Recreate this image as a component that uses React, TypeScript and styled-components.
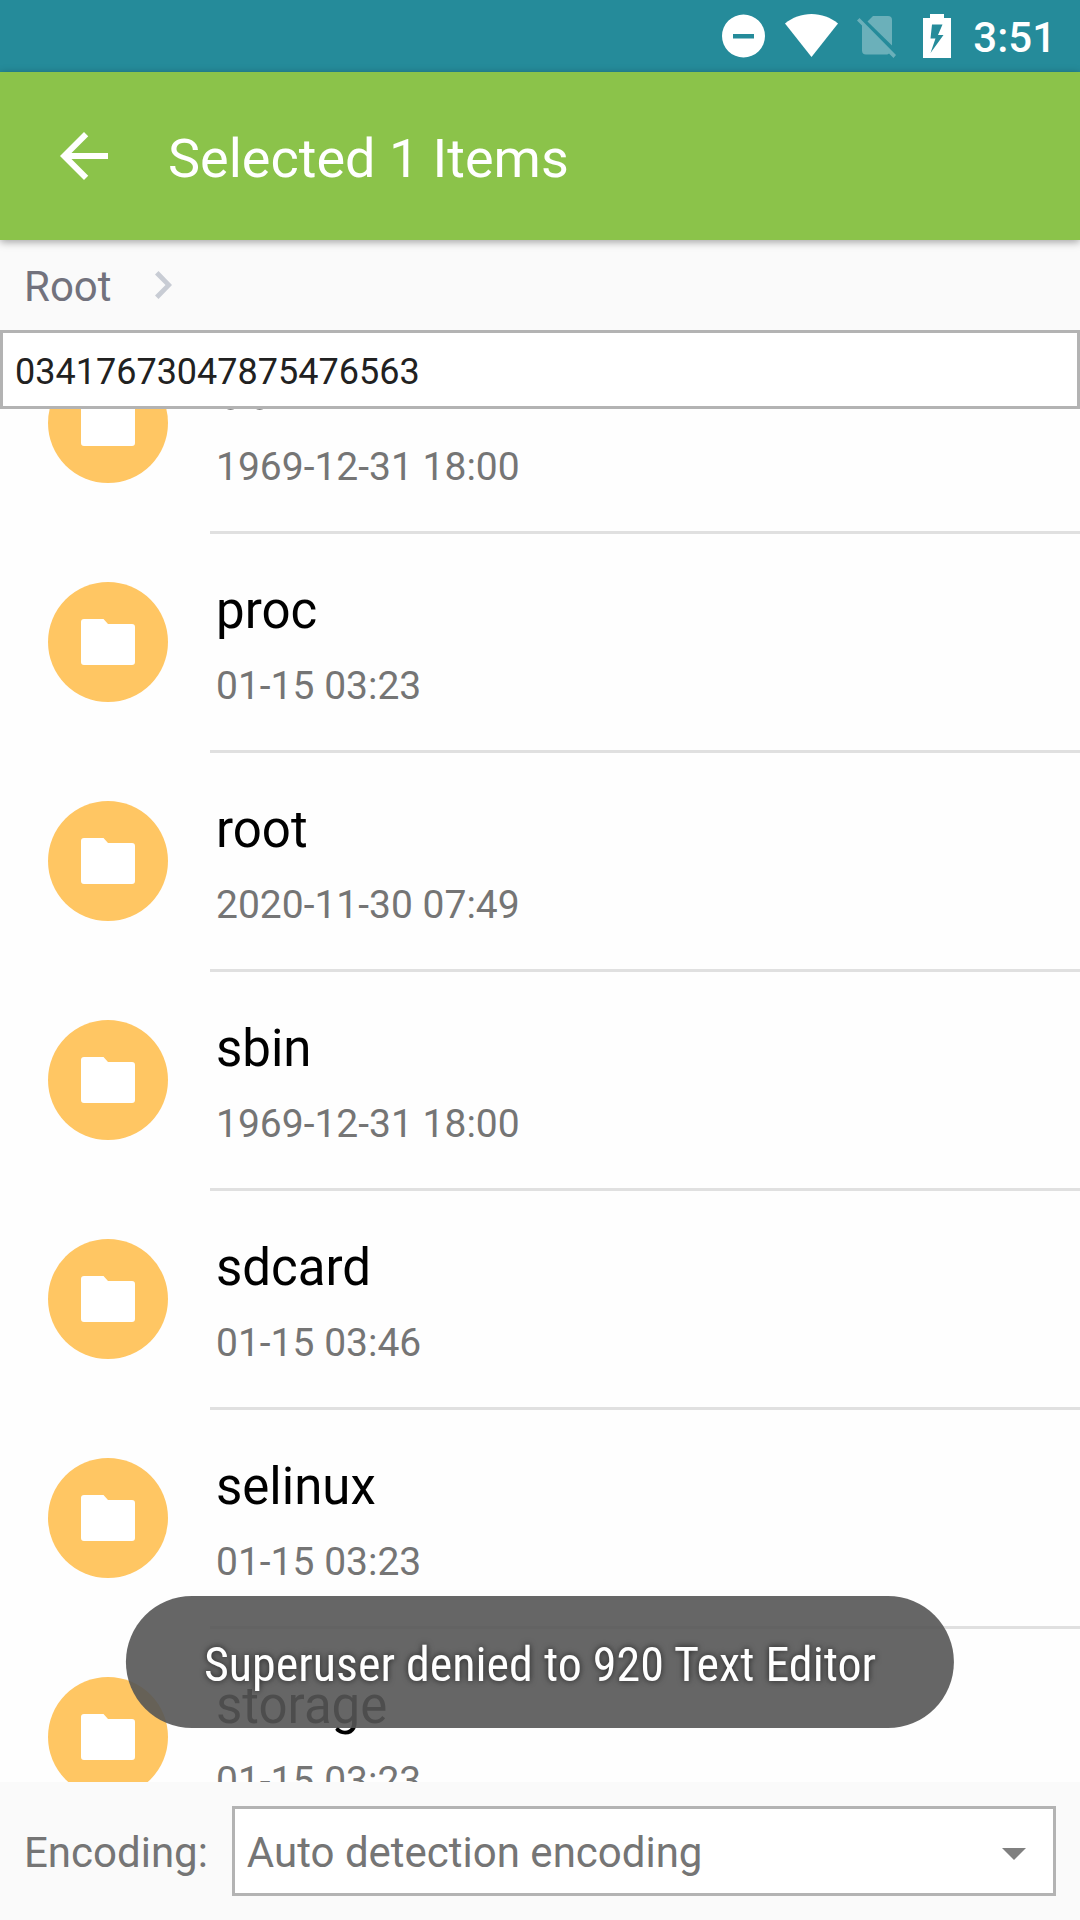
import React, { useLayoutEffect, useRef, useState } from "react";
import styled, { createGlobalStyle } from "styled-components";

const GlobalStyle = createGlobalStyle`
  *, *::before, *::after { box-sizing: border-box; }
  body { margin: 0; background: #fefefe; font-family: Roboto, "Noto Sans", sans-serif; }
`;

const Screen = styled.div`
  display: flex;
  flex-direction: column;
  height: 100vh;
  background: #fefefe;
`;

const StatusBar = styled.div`
  display: flex;
  flex: none;
  align-items: center;
  justify-content: flex-end;
  height: 72px;
  padding-right: 24px;
  background: #258b9a;
  color: #fff;
`;

const StatusIcons = styled.div`
  display: flex;
  align-items: center;
  gap: 19px;
  margin-right: 22px;
  svg { display: block; }
`;

const Clock = styled.span`
  padding-top: 4px;
  font-size: 42px;
  line-height: 48px;
  font-weight: 500;
`;

const AppBar = styled.header`
  position: relative;
  z-index: 1;
  display: flex;
  flex: none;
  align-items: center;
  gap: 48px;
  height: 168px;
  padding: 0 48px;
  background: #8bc34a;
  color: #fff;
  box-shadow: 0 2px 8px rgba(0, 0, 0, 0.36);
`;

const BackButton = styled.button`
  width: 72px;
  height: 72px;
  padding: 0;
  border: 0;
  background: none;
  color: inherit;
  svg { display: block; }
`;

const Title = styled.h1`
  margin: 0;
  padding-top: 6px;
  font-size: 54px;
  line-height: 64px;
  font-weight: 400;
`;

const Breadcrumb = styled.nav`
  display: flex;
  flex: none;
  align-items: center;
  gap: 43px;
  height: 90px;
  padding: 0 24px;
  background: #fafafa;
  svg { display: block; }
`;

const Crumb = styled.a`
  padding-top: 4px;
  font-size: 42px;
  line-height: 48px;
  color: #72727d;
  text-decoration: none;
`;

const FileNameInput = styled.input`
  flex: none;
  width: 100%;
  height: 79px;
  padding: 4px 12px 0;
  border: 3px solid #b3b3b3;
  border-radius: 0;
  outline: 0;
  background: #fff;
  color: #212121;
  font-family: inherit;
  font-size: 36px;
`;

const FileList = styled.ul`
  flex: 1;
  min-height: 0;
  margin: 0;
  padding: 0;
  overflow-y: auto;
  scrollbar-width: none;
  list-style: none;
`;

const FileRow = styled.li`
  display: flex;
  gap: 42px;
  padding-left: 48px;
`;

const FolderBadge = styled.span`
  display: flex;
  flex: none;
  align-items: center;
  justify-content: center;
  width: 120px;
  height: 120px;
  margin-top: 48px;
  border-radius: 50%;
  background: #ffc663;
`;

const FileInfo = styled.div`
  display: flex;
  flex: 1;
  flex-direction: column;
  gap: 22px;
  height: 219px;
  padding: 47px 0 0 6px;
  border-bottom: 3px solid #e0e0e0;
`;

const FileName = styled.span`
  font-size: 51px;
  line-height: 60px;
  color: #000;
`;

const FileDate = styled.span`
  font-size: 39px;
  line-height: 46px;
  color: #757575;
`;

const EncodingBar = styled.footer`
  display: flex;
  flex: none;
  align-items: center;
  gap: 24px;
  padding: 24px;
  background: #fafafa;
`;

const EncodingLabel = styled.label`
  padding-top: 4px;
  font-size: 42px;
  line-height: 48px;
  color: #757575;
`;

const SelectBox = styled.div`
  display: grid;
  flex: 1;
  align-items: center;
  > * { grid-area: 1 / 1; }
  > svg {
    display: block;
    justify-self: end;
    margin-right: 30px;
    pointer-events: none;
  }
`;

const EncodingSelect = styled.select`
  width: 100%;
  height: 90px;
  padding: 2px 12px 0;
  border: 3px solid #b3b3b3;
  border-radius: 0;
  outline: 0;
  appearance: none;
  background: #fff;
  color: #757575;
  font-family: inherit;
  font-size: 42px;
`;

const Toast = styled.div`
  position: fixed;
  z-index: 2;
  bottom: 192px;
  left: 50%;
  padding: 41px 78px 35px;
  border-radius: 66px;
  background: rgba(85, 85, 85, 0.9);
  color: #fff;
  font-family: "Roboto Condensed", Roboto, sans-serif;
  font-size: 48px;
  line-height: 56px;
  white-space: nowrap;
  text-shadow: 0 0 6px rgba(0, 0, 0, 0.7);
  transform: translateX(-50%);
`;

const FolderIcon = () => (
  <svg width="72" height="72" viewBox="0 0 72 72" fill="#fff" aria-hidden="true">
    <path d="M12 13h19.500l4.500 5h24q3 0 3 3v35q0 3-3 3H12q-3 0-3-3V16q0-3 3-3z" />
  </svg>
);

type Entry = { name: string; date: string };

const entries: Entry[] = [
  { name: "oem", date: "1969-12-31 18:00" },
  { name: "proc", date: "01-15 03:23" },
  { name: "root", date: "2020-11-30 07:49" },
  { name: "sbin", date: "1969-12-31 18:00" },
  { name: "sdcard", date: "01-15 03:46" },
  { name: "selinux", date: "01-15 03:23" },
  { name: "storage", date: "01-15 03:23" },
];

const INITIAL_SCROLL = 94;

export default function App() {
  const listRef = useRef<HTMLUListElement>(null);
  const [fileName, setFileName] = useState("03417673047875476563");

  useLayoutEffect(() => {
    if (listRef.current) listRef.current.scrollTop = INITIAL_SCROLL;
  }, []);

  return (
    <>
      <GlobalStyle />
      <Screen>
        <StatusBar>
          <StatusIcons>
            <svg width="44" height="44" viewBox="0 0 44 44" aria-hidden="true">
              <path fill="#fff" fillRule="evenodd" d="M21.500 .5a21.500 21.500 0 1 0 0 43 21.500 21.500 0 0 0 0-43zM11 20h21v4.500H11z" />
            </svg>
            <svg width="53" height="44" viewBox="0 0 53 44" aria-hidden="true">
              <path fill="#fff" d="M0 9.500C7.500 3.500 16.500 0 26.500 0S45.500 3.500 53 9.500L26.500 43z" />
            </svg>
            <svg width="47" height="44" viewBox="0 0 47 44" fill="#fff" fillOpacity="0.32" aria-hidden="true">
              <path d="M10.500 7.500L16 2h15q4 0 4 4v25.500z" />
              <path d="M2.500 4L39 41 36.500 44l-4.500-4.500Q31 40.500 30 40.500H9q-4 0-4-4v-25L0 6.500z" />
            </svg>
            <svg width="28" height="44" viewBox="0 0 28 44" aria-hidden="true">
              <path fill="#fff" fillRule="evenodd" d="M7 0h14v4h7v40H0V4h7zM9 10.500L7.500 24.500H12.500L7.500 39 20.500 21H15L19.500 10.500z" />
            </svg>
          </StatusIcons>
          <Clock>3:51</Clock>
        </StatusBar>

        <AppBar>
          <BackButton type="button" aria-label="Back">
            <svg width="72" height="72" viewBox="0 0 24 24" fill="currentColor" aria-hidden="true">
              <path d="M20 11H7.830l5.590-5.590L12 4l-8 8 8 8 1.410-1.410L7.830 13H20v-2z" />
            </svg>
          </BackButton>
          <Title>Selected 1 Items</Title>
        </AppBar>

        <Breadcrumb aria-label="Path">
          <Crumb href="#root">Root</Crumb>
          <svg width="17" height="28" viewBox="0 0 17 28" aria-hidden="true">
            <path fill="#c8ccd4" d="M3.500 0L17 14 3.500 28 0 24.500 10.500 14 0 3.500z" />
          </svg>
        </Breadcrumb>

        <FileNameInput
          type="text"
          aria-label="File name"
          value={fileName}
          onChange={(event) => setFileName(event.target.value)}
        />

        <FileList ref={listRef}>
          {entries.map((entry) => (
            <FileRow key={entry.name}>
              <FolderBadge>
                <FolderIcon />
              </FolderBadge>
              <FileInfo>
                <FileName>{entry.name}</FileName>
                <FileDate>{entry.date}</FileDate>
              </FileInfo>
            </FileRow>
          ))}
        </FileList>

        <EncodingBar>
          <EncodingLabel htmlFor="encoding">Encoding:</EncodingLabel>
          <SelectBox>
            <EncodingSelect id="encoding" defaultValue="auto">
              <option value="auto">Auto detection encoding</option>
            </EncodingSelect>
            <svg width="24" height="18" viewBox="0 0 24 18" aria-hidden="true">
              <path fill="#808080" d="M0 6h24L12 18z" />
            </svg>
          </SelectBox>
        </EncodingBar>
      </Screen>
      <Toast role="status">Superuser denied to 920 Text Editor</Toast>
    </>
  );
}
